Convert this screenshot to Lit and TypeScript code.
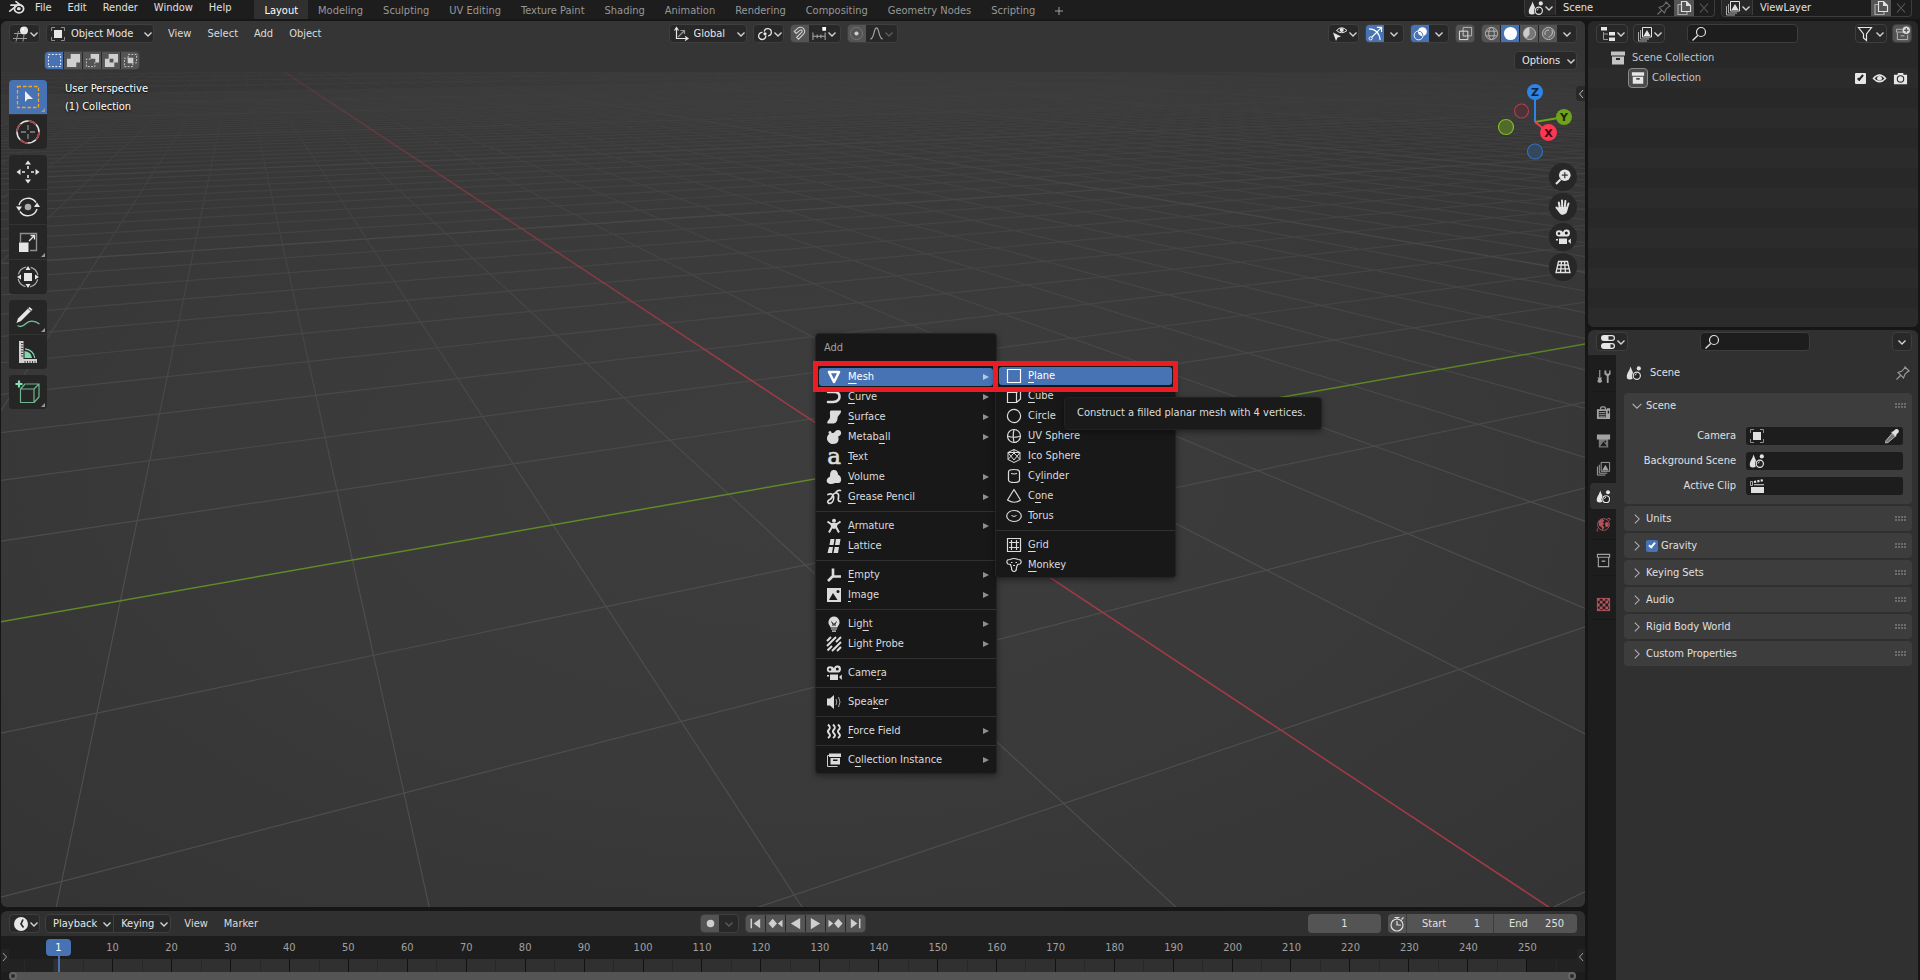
import { LitElement, html, css, svg, nothing, TemplateResult } from "lit";
import { customElement, state } from "lit/decorators.js";
import { classMap } from "lit/directives/class-map.js";

type Shape = ReturnType<typeof svg>;

/* Icons share a 16x16 box; tool icons a 24x24 box. */
const ICONS: Record<string, Shape> = {
  blender: svg`<path d="M.8 11.2 8.4 5.2M2 5.2h8M7 1.6l6 4.6" fill="none" stroke="currentColor" stroke-width="1.7" stroke-linecap="round"/><ellipse cx="10" cy="8.8" rx="4.6" ry="4" fill="none" stroke="currentColor" stroke-width="1.8"/><ellipse cx="9.8" cy="8.7" rx="1.9" ry="1.6" fill="currentColor"/>`,
  view3d: svg`<g fill="none" stroke="#999" stroke-width="1"><path d="M1 7.5h8M0 12.500h14M5.500 5 3 15.500M11 9 10 15.500"/></g><circle cx="11" cy="4.500" r="4" fill="currentColor"/><circle cx="10" cy="3.400" r="1.100" fill="#fff"/>`,
  object: svg`<path d="M1.500 5V1.500H5M11 1.500h3.500V5M14.500 11v3.500H11M5 14.500H1.500V11" fill="none" stroke="#8f8f8f"/><path d="M4 4h8v8H4z" fill="currentColor"/>`,
  selSet: svg`<path d="M1.500 1.500h13v13h-13z" fill="none" stroke="#fff" stroke-dasharray="2 1.700"/>`,
  selAdd: svg`<path d="M5 1h10v9h-4v5H1V6h4z" fill="currentColor"/>`,
  selSub: svg`<path d="M6 1h9v9h-4V6H6z" fill="currentColor"/><path d="M6 6.500H1.500v8h9V10" fill="none" stroke="currentColor" stroke-dasharray="2 1.500"/>`,
  selInv: svg`<path fill-rule="evenodd" d="M5 1h10v9h-4v5H1V6h4zm1 5v4h4V6z" fill="currentColor"/>`,
  selInt: svg`<path d="M5.500 5V1.500h9v9H11M10.500 11v3.500h-9v-9H5" fill="none" stroke="currentColor" stroke-dasharray="2 1.500"/><path d="M5 5h6v6H5z" fill="currentColor"/>`,
  orient: svg`<g fill="none" stroke="currentColor" stroke-width="1.200"><path d="M3.500 1.500v11h11"/><path d="M1.500 4.500l2-3 2 3M12 10.500l3 2-3 2"/><path d="M5 11l6-6M7.500 4.500h4V8" stroke="#999"/></g>`,
  pivot: svg`<g fill="none" stroke="currentColor" stroke-width="1.300"><path d="M7.200 5.500a3.600 3.600 0 1 1 3.800 4.300"/><path d="M8.800 9.500A3.600 3.600 0 1 1 5.500 6.300"/></g><circle cx="8" cy="7.800" r="1.600" fill="currentColor"/>`,
  magnet: svg`<path d="M2.500 5.800 6 2.500C8 1 11 1 12.500 3s1.500 4-.5 6l-5 5-2-2 5.200-5.200c1-1 .8-2-.2-2.400s-1.500 0-2 .5L4.500 8z" fill="none" stroke="currentColor" stroke-width="1.200"/>`,
  increment: svg`<path d="M1 7v8M5.500 9v4M9.500 9v4M14 7v8M1 11h13" stroke="#aaa" stroke-width="1.100"/><path d="M11 1h4v4h-4z" fill="#fff"/>`,
  prop: svg`<circle cx="8" cy="8" r="6.500" fill="none" stroke="#777"/><circle cx="8" cy="8" r="2.200" fill="#ccc"/>`,
  falloff: svg`<path d="M1.500 14C6 13 5 2 8 2s2 11 6.500 12" fill="none" stroke="#a8a8a8" stroke-width="1.200"/>`,
  visibility: svg`<path d="M1 6.500l8 4-3.400 1L4 15z" fill="currentColor"/><path d="M4.500 4.500Q9.500-1 15 4.500 9.500 9 4.500 4.500z" fill="none" stroke="currentColor"/><circle cx="9.700" cy="4" r="2" fill="currentColor"/>`,
  gizmo: svg`<path d="M1 3c7 0 11 4 12 12M4 12 14 2M9.500 1.500H14.500V6.500" fill="none" stroke="#fff" stroke-width="1.200"/><circle cx="2.800" cy="13.200" r="1.700" fill="none" stroke="#fff"/>`,
  overlay: svg`<circle cx="10" cy="6" r="4.800" fill="#fff"/><circle cx="6" cy="10" r="4.800" fill="none" stroke="#fff"/><path d="M6 5.500a5 5 0 0 1 4.500 5" fill="none" stroke="#4772b3"/>`,
  xray: svg`<path d="M5.500 1.500h9v9h-9z" fill="none" stroke="#bbb"/><path d="M1.500 5.500h9v9h-9z" fill="none" stroke="#e6e6e6"/><path d="M5.500 5v6H11" fill="none" stroke="#bbb" stroke-dasharray="1.500 1"/>`,
  wire: svg`<g fill="none" stroke="#bbb"><circle cx="8" cy="8" r="6.500"/><ellipse cx="8" cy="8" rx="3" ry="6.500"/><path d="M2.500 5.500h11M2.500 10.500h11"/></g>`,
  solid: svg`<circle cx="8" cy="8" r="7" fill="#fff"/>`,
  material: svg`<circle cx="8" cy="8" r="6.500" fill="#777" stroke="#bbb"/><path d="M8 8V1.500a6.500 6.500 0 0 0-5 10.300c1 1 3 1.200 3-.3S8 11 8 8z" fill="#ccc"/>`,
  rendered: svg`<circle cx="8" cy="8" r="6.500" fill="#6a6a6a" stroke="#bbb"/><path d="M4.500 9.500c-1-3.500 1-5.500 4-5M11.500 4c1.500 3 .5 6.500-3.500 8" fill="none" stroke="#ccc"/>`,
  scene: svg`<path d="M4.500 1.500C5.500 5 8 8 7.500 11c0 2-1 3.500-3.500 3.500S.500 13.500.800 11C1 8 3.500 6 4.500 1.500z" fill="currentColor"/><circle cx="10.800" cy="10.800" r="4.800" fill="#222"/><circle cx="10.800" cy="10.800" r="3.600" fill="none" stroke="currentColor" stroke-width="1.200"/><circle cx="12.800" cy="3.400" r="2.100" fill="currentColor"/><path d="M9 10.500q.300-1.500 1.700-1.700" fill="none" stroke="currentColor"/>`,
  pin: svg`<path d="M9.500 1.500l5 5M10 2.500 7 6 3 7.500l5.500 5.500L10 9l3.500-3M5.500 10.500 1.500 14.500" fill="none" stroke="currentColor" stroke-width="1.100"/>`,
  copy: svg`<path d="M5.500 1.500h5l4 4v6h-9z" fill="none" stroke="currentColor" stroke-width="1.200"/><path d="M10 1l5 5h-5z" fill="currentColor"/><path d="M5 4.500H2v10h9V12" fill="none" stroke="#aaa" stroke-width="1.200"/>`,
  close: svg`<path d="M4 3.500l8 9M12 3.500l-8 9" stroke="currentColor" stroke-width="1.100"/>`,
  layers: svg`<path d="M5.500 1.500h9v9.500h-9z" fill="none" stroke="currentColor"/><path d="M6.500 10 10 4l3.500 6z" fill="currentColor"/><path d="M3.500 4v9H12M1.500 6v9H10" fill="none" stroke="#aaa"/>`,
  outliner: svg`<path d="M1 1h6v3.500H1zM9 6h6v3.500H9zM9 11.500h6V15H9z" fill="currentColor"/><path d="M3.500 6v7.500H8M3.500 8H8" fill="none" stroke="#999"/>`,
  search: svg`<circle cx="10" cy="6" r="4.500" fill="none" stroke="currentColor" stroke-width="1.200"/><path d="M6.700 9.500 1.500 14.500" stroke="currentColor" stroke-width="1.400"/>`,
  filter: svg`<path d="M1.500 1.500h13L9.500 8v6.500L6.500 12V8z" fill="none" stroke="currentColor" stroke-width="1.200"/>`,
  newColl: svg`<path d="M8 3.500H1.500v3h8M2.500 7v7.500h11V9.500M6 10.500h4" fill="none" stroke="#bbb"/><circle cx="12" cy="4.500" r="4" fill="#ddd"/><path d="M12 2v5M9.500 4.500h5" stroke="#444" stroke-width="1.200"/>`,
  collection: svg`<path d="M1 1.500h14v4H1z" fill="currentColor"/><path fill-rule="evenodd" d="M2 6.500h12v8H2zm4 1.500v2h4V8z" fill="currentColor"/>`,
  collOutline: svg`<path d="M1.500 1.500h13v3h-13zM2.500 4.500v10h11v-10" fill="none" stroke="currentColor" stroke-width="1.200"/><path d="M6 8h4v1.500H6z" fill="currentColor"/>`,
  eye: svg`<path d="M1.500 8Q8 .500 14.500 8 8 15 1.500 8z" fill="none" stroke="currentColor" stroke-width="1.500"/><circle cx="8" cy="7.800" r="2.600" fill="currentColor"/>`,
  photo: svg`<path fill-rule="evenodd" d="M5 2h6v2h4v10H1V4h4zm3 2.500a4 4 0 1 0 0 8 4 4 0 0 0 0-8z" fill="currentColor"/><circle cx="8" cy="8.500" r="2.800" fill="currentColor"/>`,
  props: svg`<rect x="1" y="1" width="14" height="6" rx="3" fill="currentColor"/><rect x="1" y="9" width="14" height="6" rx="3" fill="currentColor"/><path d="M8.500 2.200H12a1.800 1.800 0 0 1 0 3.600H8.500zM10.500 10.200H12a1.800 1.800 0 0 1 0 3.600h-1.500z" fill="#2a2a2a"/>`,
  tool: svg`<path d="M4 1v8" stroke="currentColor" stroke-width="1.200"/><path d="M1.500 9h5l-1 2 1 1.500c0 3-5 3-5 0l1-1.500z" fill="currentColor"/><path d="M9 1.500v4l2.500 2V14q0 1 1 1t1-1V7.500l2-2v-4h-1.500v3L12.500 5 11 4.500v-3z" fill="currentColor"/>`,
  render: svg`<path d="M5 5V3.500q0-1.500 1.500-1.500h2Q10 2 10 3.500V5" fill="none" stroke="currentColor" stroke-width="1.300"/><path fill-rule="evenodd" d="M1 4.500h10.500V3.500H15V15H1zM3 6.500v6.500h7.500V6.500zM12.500 6v3H14V6z" fill="currentColor"/><path d="M3.500 8H10M3.500 10H10M3.500 12H10" stroke="currentColor" stroke-width=".9"/>`,
  output: svg`<path d="M1 1.500h14v5H13.500V5h-11V6.500H1z" fill="currentColor"/><path d="M3 5.500h10V15.500H3z" fill="#777"/><path d="M4.500 14 8 9l3.500 5z" fill="#1d1d1d"/><path d="M1 3.500h14v3.500H1z" fill="currentColor"/><circle cx="10" cy="9" r="1" fill="#1d1d1d"/>`,
  world: svg`<circle cx="8" cy="8" r="6.300" fill="none" stroke="currentColor"/><path d="M3 4l4-2 2 2-2 2 2 1-2 2 2 2-2 3-1-3-3-2zM10.500 5l3 1v4l-3 1-1-3z" fill="currentColor"/><path d="M12 2q3-1.500 3 0T14 4M2 12Q0 15.500 2.500 15" fill="none" stroke="currentColor"/>`,
  texture: svg`<path d="M1.500 1.500h13v13h-13z" fill="none" stroke="currentColor"/><path d="M1 1h3v3H1zM7 1h3v3H7zM12 1h3v3h-3zM4 4h3v3H4zM10 4h3v3h-3zM1 7h3v3H1zM7 7h3v3H7zM13 7h2v3h-2zM4 10h3v3H4zM10 10h3v3h-3zM1 12.500h3V15H1zM7 13h3v2H7zM12.500 13H15v2h-2.500z" fill="currentColor"/>`,
  dropper: svg`<path d="M8 5.500l3 3-7 6-2.500.500L2 12.500z" fill="#777" stroke="#ccc" stroke-width=".8"/><path d="M7 4l2-.5L11.500 1.200c2-1 4 1 3.200 3L12.500 6.500 12 9z" fill="currentColor"/>`,
  clip: svg`<path d="M1.500 3.500h2v4h-2z" fill="none" stroke="#aaa"/><path d="M5 4l10-2" fill="none" stroke="currentColor" stroke-width="2.200" stroke-dasharray="2.200 1.200"/><path d="M5 6.200h10v1H5zM2 9h13v6H2z" fill="currentColor"/>`,
  panelOpen: svg`<path d="M3 5.500l5 5 5-5" fill="none" stroke="currentColor" stroke-width="1.200"/>`,
  panelClosed: svg`<path d="M5.500 3l5 5-5 5" fill="none" stroke="currentColor" stroke-width="1.200"/>`,
  clock: svg`<circle cx="8" cy="8" r="7" fill="currentColor"/><path d="M10 3.500 8 8l2.500 3.500" fill="none" stroke="#282828" stroke-width="1.700"/>`,
  record: svg`<circle cx="8" cy="8" r="4" fill="currentColor"/>`,
  first: svg`<path d="M3.500 3v10" stroke="currentColor" stroke-width="1.600"/><path d="M13 3v10L6 8z" fill="currentColor"/>`,
  prevKey: svg`<path d="M5 3l4.500 5L5 13 .500 8zM15.500 4v8L10.500 8z" fill="currentColor"/>`,
  playRev: svg`<path d="M13 2v12L3 8z" fill="currentColor"/>`,
  play: svg`<path d="M3 2v12l10-6z" fill="currentColor"/>`,
  nextKey: svg`<path d="M11 3l4.500 5L11 13 6.500 8zM.500 4v8L5.500 8z" fill="currentColor"/>`,
  last: svg`<path d="M12.500 3v10" stroke="currentColor" stroke-width="1.600"/><path d="M3 3v10l7-5z" fill="currentColor"/>`,
  stopwatch: svg`<circle cx="8" cy="9" r="6" fill="none" stroke="currentColor" stroke-width="1.200"/><path d="M8 5v4h4M5.500 1.500h5M8 1.500V3M12.500 3.500l2-2" fill="none" stroke="currentColor" stroke-width="1.200"/>`,

  mesh: svg`<path d="M3 3h10L8 13z" fill="none" stroke="currentColor" stroke-width="2.600" stroke-linejoin="round"/>`,
  curve: svg`<path d="M2 3h6c4 0 5.500 2 5.500 4.500S12 13 7 13H2" fill="none" stroke="currentColor" stroke-width="2.600" stroke-linecap="round"/>`,
  surface: svg`<path d="M5 1.500h9.500c.5 0 .5.500.5 1-.3 3-3.500 4-3.500 7 0 2-1.500 5-4 5H1.500c-1-2.500 2-3.500 2.500-6C4.500 6 3 2 5 1.500z" fill="currentColor"/>`,
  metaball: svg`<path d="M7 4c2 0 2-3 5-3 4 0 4 5 1 6-1.500.5 0 2-.5 4-.500 3-3 4-5.500 4S1 13 1 9.500 3.500 4 7 4z" fill="currentColor"/><circle cx="4" cy="3.500" r="1.500" fill="currentColor"/>`,
  text: svg`<text x="8" y="14.500" text-anchor="middle" font-family="DejaVu Serif, serif" font-size="23" stroke="currentColor" stroke-width=".7" fill="currentColor">a</text>`,
  volume: svg`<path d="M7 1c3-.5 5 1.500 5 4.500 3 1.500 4 5 2.500 7.500-1.500 2-3.500.500-5.500 1-2.500 1.500-6.500 1.500-8-1-1-2.500 1-4.500 3-5.500C4 4 4.500 1.500 7 1z" fill="currentColor"/>`,
  grease: svg`<path d="M14.500 1.500c-2-.5-3.500.300-4.500 1.700M2 5.500c3-1.500 5-.5 5.500 2s-.500 5.500-2.500 6.500-4-.5-3-2 3-1 4-4 2-4 4-4 3 1.500 2.500 4-.5 4.500 2 4.500" fill="none" stroke="currentColor" stroke-width="1.700" stroke-linecap="round"/>`,
  armature: svg`<circle cx="8" cy="2.800" r="2" fill="currentColor"/><path d="M1.500 3.500 5 6h6l3.500-2.500M5.500 6l.500 3-3 5.500M10.500 6 10 9l3 5.500" fill="none" stroke="currentColor" stroke-width="2"/><path d="M5 5h6l-.500 5-2.500 1-2.500-1z" fill="currentColor"/>`,
  lattice: svg`<path d="M4.500 1h4L7.500 7h-4zM10 1h4.500l-1 6H9zM3 9h4l-1 6H1.500zM8.700 9h4.300l-1 6H7.500z" fill="currentColor"/>`,
  empty: svg`<path d="M7 1.500V9.500M7 9.500h8M7 9l-5 5" fill="none" stroke="currentColor" stroke-width="2.600"/>`,
  image: svg`<path d="M1 1h14v14H1z" fill="currentColor"/><path d="M3 13l4-7 4.500 7z" fill="#181818"/><circle cx="12" cy="4.500" r="1.500" fill="#181818"/>`,
  light: svg`<path d="M8 .500a5.800 5.800 0 0 0-3.700 10V11.500h7.400V10.500A5.800 5.800 0 0 0 8 .500zM5 12.500h6v1H5zM6 14.500h4v1.200H6z" fill="currentColor"/><path d="M5.500 5.500l1.500 2.500V10M10.500 5.500 9 8V10M7 8h2" fill="none" stroke="#181818"/>`,
  probe: svg`<path d="M1 5l4-4M1 10l9-9M1.500 14.500 6 10M10 6l5-5M6 15l9-9M11 15l4-4" stroke="currentColor" stroke-width="2"/>`,
  camera: svg`<path d="M4 1.200a3 3 0 1 0 0 6.300h7.500A3.500 3.500 0 1 0 8 3.500C7.500 2 6 1.200 4 1.200zM4 9.500h8V15H4zM13 12l2.800-2.500V15zM1 10h2v1.500H1z" fill="currentColor"/><circle cx="4" cy="4.500" r="1.300" fill="#181818"/><circle cx="11.300" cy="4" r="1.500" fill="#181818"/>`,
  speaker: svg`<path d="M1 4.500h3L8 1v14l-4-3.500H1z" fill="currentColor"/><path d="M10 5q1.500 3 0 6M12.500 3q3 5 0 10" fill="none" stroke="#aaa"/>`,
  force: svg`<path d="M2 1.500c2.500 2.500 2.500 3.500 1 5s-1.500 2.500 0 4 1.500 2.500-1 4.500M7 1.500c2.500 2.500 2.500 3.500 1 5s-1.500 2.500 0 4 1.500 2.500-1 4.500M12 1.500c2.500 2.500 2.500 3.500 1 5s-1.500 2.500 0 4 1.500 2.500-1 4.500" fill="none" stroke="currentColor" stroke-width="1.900"/>`,
  instance: svg`<path d="M3 1.500h12V5H3z" fill="currentColor"/><path fill-rule="evenodd" d="M4.500 6H14v6.500H4.500zM7 7.500V9h4.500V7.500z" fill="currentColor"/><path d="M3.500 3.500h-2V14.500h10" fill="none" stroke="#ccc"/>`,

  plane: svg`<path d="M1.500 1.500h13v13h-13z" fill="none" stroke="currentColor" stroke-width="1.200"/>`,
  cube: svg`<path d="M1.500 4.500h9v10h-9zM1.500 4.500l3-3h10v9.500l-4 3.500M10.500 4.500l4-3" fill="none" stroke="currentColor" stroke-width="1.200"/>`,
  circle: svg`<circle cx="8" cy="8" r="6.600" fill="none" stroke="currentColor" stroke-width="1.200"/>`,
  uv: svg`<g fill="none" stroke="currentColor" stroke-width="1.200"><circle cx="8" cy="8" r="6.500"/><path d="M8 1.500Q6.500 8 8 14.500M1.500 8Q8 10.500 14.500 8"/></g>`,
  ico: svg`<path d="M8 1.500l6 3v7l-6 3-6-3v-7zM2 4.500l12 0L8 12zM2 11.500 8 5l6 6.500M8 1.500V5" fill="none" stroke="currentColor"/>`,
  cylinder: svg`<path d="M2.500 4Q2.500 1.500 8 1.500T13.500 4v8q0 2.500-5.500 2.500T2.500 12z" fill="none" stroke="currentColor" stroke-width="1.200"/><path d="M5 5.500q3 1 6 0" fill="none" stroke="currentColor"/>`,
  cone: svg`<path d="M8 1.500 1.500 12Q8 16.500 14.500 12z" fill="none" stroke="currentColor" stroke-width="1.200" stroke-linejoin="round"/>`,
  torus: svg`<ellipse cx="8" cy="8" rx="7.300" ry="5.500" fill="none" stroke="currentColor" stroke-width="1.200"/><path d="M5.500 7.500q2.500 2 5 0" fill="none" stroke="currentColor"/>`,
  grid: svg`<path d="M1.500 1.500h13v13h-13zM5.500 3v10M10.500 3v10M3 5.500h10M3 10.500h10" fill="none" stroke="currentColor" stroke-width="1.200"/>`,
  monkey: svg`<path d="M4 2.500q4-2 8 0l2.500.5q1.500 2.500-.5 4l-2.500.5-1 3q0 4-2.500 4t-2.500-4l-1-3L2 7Q0 5.500 1.500 3z" fill="none" stroke="currentColor" stroke-width="1.200"/><path d="M5 5.500h1.500M9.500 5.500H11M7 8.500h2" stroke="currentColor"/>`,
};

const TOOLS: Record<string, Shape> = {
  select: svg`<path d="M1.500 1.500h21v21h-21z" fill="none" stroke="#f5a623" stroke-width="1.300" stroke-dasharray="3.500 2"/><path d="M9 6v11l2.800-3 5.200 0z" fill="#eee"/>`,
  cursor: svg`<circle cx="12" cy="12" r="11" fill="none" stroke="#e6e6e6" stroke-width="1.500"/><circle cx="12" cy="12" r="11" fill="none" stroke="#a33b42" stroke-width="1.500" stroke-dasharray="8.640 8.640"/><path d="M12 5v5M12 14v5M5 12h5M14 12h5" stroke="#8a8a8a" stroke-width="1.300"/>`,
  move: svg`<g fill="#e6e6e6"><path d="M12 .5l3 4H9zM12 23.500l3-4H9zM.5 12l4-3v6zM23.500 12l-4-3v6zM11.200 6h1.600v3h-1.600zM11.200 15h1.600v3h-1.600zM6 11.200h3v1.600H6zM15 11.200h3v1.600h-3z"/></g>`,
  rotate: svg`<path d="M3 10a9.500 9.500 0 0 1 17-2.500M21 14a9.500 9.500 0 0 1-17 2.500" fill="none" stroke="#e6e6e6" stroke-width="1.400"/><path d="M0 11.500h6l-3 4.500zM18 12h6l-3-4.500z" fill="#e6e6e6"/><circle cx="12" cy="12" r="3.300" fill="#aaa"/>`,
  scale: svg`<path d="M4.500 12V3.500h16v17H14" fill="none" stroke="#8f8f8f" stroke-width="1.400"/><path d="M3 12.500h9.500V22H3z" fill="#e6e6e6"/><path d="M13 11l5-5M14.500 5.500H18.500V9.500" fill="none" stroke="#e6e6e6" stroke-width="1.300"/>`,
  transform: svg`<circle cx="12" cy="12" r="10" fill="none" stroke="#aaa" stroke-width="1.300" stroke-dasharray="11 4.700" stroke-dashoffset="-2.500"/><path d="M8 8h8v8H8z" fill="#e6e6e6"/><path d="M12 1l2.500 4h-5zM12 23l2.500-4h-5zM1 12l4-2.500v5zM23 12l-4-2.500v5z" fill="#e6e6e6"/>`,
  annotate: svg`<path d="M.5 18 2 13.500 13.500 2 16.500 4.500 5 16z" fill="#e6e6e6"/><path d="M11.500 3l4 3.500" stroke="#555"/><path d="M1.500 20.500c3.500 2.500 6 .5 8.500-2s7.500-4 13.500.5" fill="none" stroke="#70c49a" stroke-width="1.300"/>`,
  measure: svg`<path d="M3 1h4.500v18H21v4H3z" fill="#d0d0d0"/><path d="M5 3.500h2.500M5 6h2.500M5 8.500h2.500M5 11h2.500M5 13.500h2.500M5 16h2.500M9 21v2M11.500 21v2M14 21v2M16.500 21v2M19 21v2" stroke="#444"/><path d="M8.500 11Q15 11.500 16 18H8.500z" fill="#84d6ac"/><path d="M9 8.800Q17.500 10 18.800 18" fill="none" stroke="#84d6ac" stroke-width="1.200"/>`,
  addCube: svg`<path d="M4.500 9h13.500v13.500H4.500zM4.500 9l5-5.500M18 9l5-5M18 22.500l5-5.500V4H10" fill="none" stroke="#70b58f" stroke-width="1.200"/><path d="M3 .5v7M-.5 4h7" stroke="#84e0b0" stroke-width="2.200"/>`,
};

const NAV: Record<string, Shape> = {
  "Zoom in/out": svg`<circle cx="9.800" cy="6.200" r="5.800" fill="#e3e3e3"/><path d="M5.500 10.500 1 15" stroke="#e3e3e3" stroke-width="2.200"/><path d="M9.800 3.200v6M6.800 6.200h6" stroke="#333" stroke-width="1.200"/>`,
  "Move the view": svg`<path d="M4.800 9 3.800 3.500M7.200 8 7 1.500M9.800 8l.6-6M12 9l1.500-4.500M4.500 12 1.500 8.500" stroke="#e3e3e3" stroke-width="2" stroke-linecap="round"/><path d="M3.500 8h9.500q0 3.500-1.500 6Q9 16.500 6 15.500 4 14 2.500 10.500z" fill="#e3e3e3"/>`,
  "Toggle camera view": ICONS.camera,
  "Switch projection": svg`<path d="M3.500 2.500h9l2.500 11H1zM2.700 6h10.600M1.800 9.800h12.400M6.500 2.500l-1 11M9.500 2.500l1 11" fill="none" stroke="#e3e3e3" stroke-width="1.300"/>`,
};

interface MenuEntry { icon: string; label: string; key: number; sub?: boolean; active?: boolean; }

const ADD_MENU: MenuEntry[][] = [
  [
    { icon: "mesh", label: "Mesh", key: 0, sub: true, active: true },
    { icon: "curve", label: "Curve", key: 0, sub: true },
    { icon: "surface", label: "Surface", key: 0, sub: true },
    { icon: "metaball", label: "Metaball", key: 5, sub: true },
    { icon: "text", label: "Text", key: 0 },
    { icon: "volume", label: "Volume", key: 0, sub: true },
    { icon: "grease", label: "Grease Pencil", key: 0, sub: true },
  ],
  [
    { icon: "armature", label: "Armature", key: 0, sub: true },
    { icon: "lattice", label: "Lattice", key: 0 },
  ],
  [
    { icon: "empty", label: "Empty", key: 0, sub: true },
    { icon: "image", label: "Image", key: 0, sub: true },
  ],
  [
    { icon: "light", label: "Light", key: 3, sub: true },
    { icon: "probe", label: "Light Probe", key: 6, sub: true },
  ],
  [{ icon: "camera", label: "Camera", key: 4 }],
  [{ icon: "speaker", label: "Speaker", key: 4 }],
  [{ icon: "force", label: "Force Field", key: 0, sub: true }],
  [{ icon: "instance", label: "Collection Instance", key: 1, sub: true }],
];

const MESH_MENU: MenuEntry[][] = [
  [
    { icon: "plane", label: "Plane", key: 0, active: true },
    { icon: "cube", label: "Cube", key: 0 },
    { icon: "circle", label: "Circle", key: 2 },
    { icon: "uv", label: "UV Sphere", key: 0 },
    { icon: "ico", label: "Ico Sphere", key: 0 },
    { icon: "cylinder", label: "Cylinder", key: 2 },
    { icon: "cone", label: "Cone", key: 1 },
    { icon: "torus", label: "Torus", key: 0 },
  ],
  [
    { icon: "grid", label: "Grid", key: 0 },
    { icon: "monkey", label: "Monkey", key: 0 },
  ],
];

const WORKSPACES = ["Layout", "Modeling", "Sculpting", "UV Editing", "Texture Paint", "Shading", "Animation", "Rendering", "Compositing", "Geometry Nodes", "Scripting"];

const icon = (name: string, cls = ""): TemplateResult =>
  html`<svg class="ic ${cls}" viewBox="0 0 16 16" aria-hidden="true">${ICONS[name]}</svg>`;

const chevron = (dim = false): TemplateResult =>
  html`<svg class=${classMap({ chev: true, dim })} viewBox="0 0 10 10" aria-hidden="true"><path d="M1.500 3.500 5 7l3.500-3.500" fill="none" stroke="currentColor" stroke-width="1.400"/></svg>`;

const range = (a: number, b: number) => Array.from({ length: b - a + 1 }, (_, i) => a + i);

/* Floor grid: two line families, each through its own vanishing point on the horizon. */
const HORIZON = 41;
const FLOOR = 1107;
const along = (vx: number, base: number) => vx + ((base - vx) * (FLOOR - HORIZON)) / (907 - HORIZON);
const xLine = (k: number) => ({ vx: 238, base: 1549 + 373 * k });
const yLine = (k: number) => ({ vx: 3314, base: -1626 - 795 * k });
const gridLine = (l: { vx: number; base: number }) =>
  svg`<line x1=${l.vx} y1=${HORIZON} x2=${Math.round(along(l.vx, l.base))} y2=${FLOOR}></line>`;

@customElement("app-root")
export class AppRoot extends LitElement {
  @state() private gravity = true;

  static styles = css`
    :host {
      display: flex;
      flex-direction: column;
      height: 100vh;
      overflow: hidden;
      background: #161616;
      color: #e0e0e0;
      font: 11px/14px "DejaVu Sans Condensed", "DejaVu Sans", sans-serif;
    }
    *, *::before, *::after { box-sizing: border-box; }
    button, input, select {
      font: inherit;
      color: inherit;
      margin: 0;
      padding: 0;
      border: 0;
      background: none;
      outline: 0;
      white-space: nowrap;
    }
    select { appearance: none; }
    .ic { width: 16px; height: 16px; flex: none; display: block; overflow: visible; }
    .chev { width: 10px; height: 10px; flex: none; display: block; color: #d4d4d4; pointer-events: none; }
    .dim { opacity: 0.3; }
    .grow { flex: 1; }

    .topbar { display: flex; align-items: flex-start; height: 21px; background: #1d1d1d; border-bottom: 2px solid #161616; padding-left: 9px; padding-right: 8px; flex: none; }
    .logo { height: 14px; margin-right: 2px; }
    .menu-btn { padding: 0 8px; height: 15px; line-height: 15px; }
    .tabs { display: flex; margin-left: 15px; }
    .tab { padding: 2px 10px 0; height: 19px; color: #989898; }
    .tab.on { background: #303030; color: #fff; }
    .idblock { display: flex; height: 17px; border: 1px solid #3d3d3d; border-top: 0; border-radius: 0 0 4px 4px; background: #1d1d1d; margin-left: 6px; overflow: hidden; }
    .idtype { display: flex; align-items: center; width: 31px; height: 15px; padding-left: 3px; border-right: 1px solid #3d3d3d; background: #282828; }
    .idname { width: 98px; padding-left: 7px; height: 15px; }
    .idbtn { width: 20px; display: grid; place-items: center; height: 16px; }
    .idbtn.lit { background: #545454; }
    .idbtn.off { color: #5c5c5c; }
    .idpin { color: #6c6c6c; }

    .main { flex: 1; min-height: 0; display: grid; grid-template-columns: minmax(0, 1fr) 330px; column-gap: 3px; padding: 0 2px 0 1px; }
    .left { display: flex; flex-direction: column; gap: 4px; min-height: 0; }
    .right { display: flex; flex-direction: column; gap: 3px; min-height: 0; }

    .viewport { position: relative; flex: 1; min-height: 0; border-radius: 6px; overflow: hidden; background: radial-gradient(ellipse at 50% 50%, #3d3d3d 0%, #3a3a3a 50%, #343434 100%); }
    .scene3d { position: absolute; inset: 0; width: 100%; height: 100%; }
    .minor line { stroke: #4e4e4e; stroke-width: 1.2; }
    .major line { stroke: #565656; stroke-width: 1.4; }
    .vhead { position: relative; background: #353535; padding: 0 8px; }
    .row { display: grid; grid-template-columns: 1fr auto 1fr; height: 26px; align-items: start; padding-top: 3px; }
    .row.second { grid-template-columns: auto 1fr auto; height: 25px; padding-top: 4px; }
    .zone { display: flex; align-items: center; gap: 6px; }
    .zone.mid { margin-right: 20px; }
    .zone.end { justify-content: flex-end; }
    .zone.tools { padding-left: 35px; }
    .menus { display: flex; }
    .menus .menu-btn { height: 19px; line-height: 19px; color: #dcdcdc; }

    .ctl { display: flex; align-items: center; height: 19px; border: 1px solid #3f3f3f; border-radius: 4px; background: #282828; color: #e6e6e6; }
    .pair { width: 31px; padding-left: 3px; }
    .pick { padding-left: 3px; }
    .pick select { flex: 1; min-width: 0; padding-left: 5px; height: 17px; line-height: 17px; }
    .mode { width: 108px; }
    .orient { width: 78px; }
    .group { display: flex; border-radius: 4px; overflow: hidden; background: #282828; height: 19px; border: 1px solid #3f3f3f; gap: 1px; }
    .cell { width: 18px; height: 17px; display: grid; place-items: center; color: #cfcfcf; }
    .cell.lit { background: #545454; }
    .cell.blue { background: #4772b3; }
    .cell.duo { display: flex; align-items: center; width: 30px; padding-left: 2px; }
    .cell .ic { width: 15px; height: 15px; }
    .options { padding: 0 0 0 7px; width: 63px; justify-content: space-between; }

    .info { position: absolute; left: 64px; top: 59px; line-height: 18px; color: #fff; text-shadow: 0 1px 2px #000; margin: 0; }
    .toolbar { position: absolute; left: 8px; top: 59px; display: flex; flex-direction: column; gap: 6px; }
    .toolset { display: flex; flex-direction: column; gap: 1px; border-radius: 4px; overflow: hidden; background: #333; }
    .tool { position: relative; width: 38px; height: 34px; display: grid; place-items: center; background: #262626; }
    .tool.on { background: #4772b3; }
    .tool svg { width: 24px; height: 24px; display: block; overflow: visible; }
    .tool.more::after { content: ""; position: absolute; right: 2px; bottom: 2px; border: 2px solid transparent; border-right-color: #9a9a9a; border-bottom-color: #9a9a9a; }
    .axes { position: absolute; right: 8px; top: 58px; width: 88px; height: 88px; }
    .axes text { font-size: 11px; font-weight: bold; text-anchor: middle; font-family: "DejaVu Sans", sans-serif; }
    .nav { position: absolute; right: 8px; top: 142px; display: flex; flex-direction: column; gap: 2px; }
    .navbtn { width: 28px; height: 28px; border-radius: 50%; background: #272727; display: grid; place-items: center; color: #e3e3e3; }
    .navbtn svg { width: 16px; height: 16px; display: block; }
    .side-toggle { position: absolute; right: 0; top: 65px; width: 9px; height: 15px; border-radius: 4px 0 0 4px; background: #292929; color: #bbb; display: grid; place-items: center; }
    .arrow { width: 8px; height: 10px; display: block; }

    .popup { position: absolute; background: #181818; border: 1px solid #242424; border-radius: 4px; box-shadow: 0 2px 6px #0006; }
    .add { left: 814px; top: 312px; width: 182px; padding-bottom: 3px; }
    .mesh { left: 994px; top: 343px; width: 181px; padding: 1px 0 2px; }
    .pop-title { height: 33px; padding: 7px 8px 0; color: #a0a0a0; margin: 0; font-size: 11px; font-weight: normal; }
    .section { display: flex; flex-direction: column; }
    .section + .section { border-top: 1px solid #303030; margin-top: 4px; padding-top: 4px; }
    .item { display: flex; align-items: center; gap: 6px; height: 18px; margin: 1px 3px; padding: 0 4px 0 7px; border-radius: 3px; text-align: left; color: #dcdcdc; }
    .item.on { background: #4772b3; color: #fff; }
    .key { text-decoration: underline; text-underline-offset: 3px; text-decoration-thickness: 1px; text-decoration-skip-ink: none; }
    .sub { margin-left: auto; border: 3px solid transparent; border-left: 6px solid #8f8f8f; border-right: 0; }
    .item.on .sub { border-left-color: #b9c8e2; }
    .mark { position: absolute; top: 340px; width: 185px; height: 31px; border: 5px solid #ed1c24; pointer-events: none; }
    .mark.one { left: 812px; }
    .mark.two { left: 992px; }
    .tooltip { position: absolute; left: 1063px; top: 376px; padding: 8px 12px; width: 258px; height: 33px; border-radius: 4px; background: #1a1a1a; border: 1px solid #222; color: #dcdcdc; box-shadow: 0 2px 6px #0006; white-space: nowrap; }

    .panel { border-radius: 6px; overflow: hidden; }
    .outliner { background: #282828; flex: 0 0 306px; display: flex; flex-direction: column; }
    .phead { display: flex; gap: 5px; height: 27px; padding: 3px 6px 0 8px; flex: none; align-items: flex-start; }
    .phead .pair { width: 32px; }
    .phead .pair.snug { padding-left: 1px; gap: 2px; }
    .search { display: flex; align-items: center; height: 19px; border: 1px solid #3d3d3d; border-radius: 4px; background: #1d1d1d; width: 111px; padding-left: 3px; margin-left: 17px; }
    .search input { width: 80px; }
    .tree { flex: 1; background: repeating-linear-gradient(#282828 0 20px, #2b2b2b 20px 40px); list-style: none; margin: 0; padding: 0; color: #c3c3c3; }
    .branch { display: flex; align-items: center; height: 20px; padding-left: 22px; gap: 6px; }
    .branch.child { padding: 0 10px 0 40px; gap: 4px; }
    .boxed { width: 20px; height: 20px; display: grid; place-items: center; border: 1px solid #8a8a8a; border-radius: 4px; background: #4a4a4a; color: #e6e6e6; }
    .boxed .ic { width: 14px; height: 14px; }
    .toggles { display: flex; align-items: center; gap: 6px; margin-left: auto; color: #e6e6e6; }
    .toggles .ic { width: 15px; height: 15px; }
    .tick { appearance: none; width: 11px; height: 11px; border-radius: 1px; background: #e6e6e6; position: relative; flex: none; }
    .tick:checked::after { content: ""; position: absolute; left: 35%; top: 10%; width: 30%; height: 60%; border: solid #222; border-width: 0 2px 2px 0; rotate: 40deg; }
    .tick.blue { width: 12px; height: 12px; border-radius: 2px; background: #4772b3; }
    .tick.blue:checked::after { border-color: #fff; }
    .tick.blue:not(:checked) { background: #545454; }

    .properties { background: #303030; flex: 1; min-height: 0; display: flex; flex-direction: column; border-radius: 6px 6px 0 0; }
    .phead.prop { height: 25px; padding-top: 2px; }
    .phead.prop .search { width: 110px; margin-left: 67px; }
    .small { width: 20px; justify-content: center; }
    .pbody { flex: 1; display: grid; grid-template-columns: 28px minmax(0, 1fr); min-height: 0; }
    .ptabs { background: #1d1d1d; display: flex; flex-direction: column; padding: 8px 0 0 2px; color: #a3a3a3; }
    .ptab { width: 26px; height: 26px; margin-bottom: 2px; display: grid; place-items: center; border-radius: 4px 0 0 4px; }
    .ptab .ic { width: 15px; height: 15px; }
    .ptab.on { background: #303030; color: #e6e6e6; }
    .ptab.red { color: #b3525a; }
    .rule { height: 1px; border: 0; background: #181818; margin: 0 0 7px 2px; }
    .rule.late { margin-bottom: 15px; }
    .pmain { padding: 8px 6px 0 8px; display: flex; flex-direction: column; gap: 2px; }
    .crumb { display: flex; align-items: center; height: 20px; gap: 8px; padding: 0 1px 0 2px; margin-bottom: 8px; }
    .crumb .idpin { margin-left: auto; color: #9a9a9a; }
    .card { background: #3d3d3d; border-radius: 4px; }
    .ctitle { display: flex; align-items: center; width: 100%; height: 25px; padding: 0 5px 0 6px; gap: 2px; }
    .ctitle .ic { color: #b5b5b5; width: 14px; height: 14px; }
    .fold { display: flex; align-items: center; gap: 2px; height: 25px; text-align: left; }
    .glabel { padding-left: 1px; }
    .dots { width: 12px; height: 6px; margin-left: auto; background: radial-gradient(circle at 1px 1px, #6e6e6e 0.7px, transparent 1px) 0 0 / 3px 3px; }
    .fields { display: grid; grid-template-columns: 112px minmax(0, 1fr); row-gap: 7px; column-gap: 10px; padding: 9px 9px 9px 0; align-items: center; }
    .fields label { text-align: right; }
    .field { display: flex; align-items: center; height: 18px; background: #1d1d1d; border-radius: 3px; padding: 0 3px; }
    .field input { flex: 1; min-width: 0; }

    .timeline { flex: 0 0 69px; background: #1d1d1d; border-radius: 6px 6px 0 0; overflow: hidden; position: relative; display: flex; flex-direction: column; }
    .thead { display: grid; grid-template-columns: 1fr auto 1fr; height: 25px; flex: none; background: #303030; padding: 3px 8px 0 8px; }
    .tmid { display: flex; align-items: flex-start; gap: 6px; margin-right: 20px; }
    .tleft { display: flex; align-items: flex-start; gap: 5px; }
    .tright { display: flex; align-items: flex-start; gap: 7px; justify-content: flex-end; }
    .drop { display: flex; align-items: center; padding: 0 1px 0 7px; height: 17px; gap: 5px; color: #e6e6e6; }
    .drop + .drop { border-left: 1px solid #3f3f3f; }
    .tleft .group { gap: 0; }
    .cell.key19 { width: 19px; }
    .num { background: #545454; border-radius: 4px; height: 19px; width: 73px; text-align: center; }
    .range { display: flex; background: #545454; border-radius: 4px; height: 19px; overflow: hidden; }
    .range > * { border-left: 1px solid #3d3d3d; }
    .range > :first-child { border-left: 0; width: 18px; display: grid; place-items: center; }
    .span { display: flex; align-items: center; justify-content: space-between; padding: 0 13px 0 15px; width: 87px; }
    .span.last { width: 84px; }
    .span input { width: 30px; text-align: right; }
    .ruler { display: flex; height: 23px; padding: 5px 28px 0 82px; color: #a0a0a0; flex: none; }
    .ruler span { flex: 1; text-align: center; width: 0; }
    .ticks { display: flex; height: 13px; padding-left: 23px; background: #222; flex: none; }
    .ticks i { flex: 1; border-left: 1px solid #282828; }
    .ticks .in { background: #303030; }
    .ticks .ten { border-left-color: #121212; }
    .track { height: 8px; margin: 0 9px 0 8px; border-radius: 4px; background: #545454; display: flex; justify-content: space-between; flex: none; }
    .track i { width: 8px; height: 8px; border-radius: 50%; background: #2b2b2b; border: 2px solid #666; }
    .playhead { position: absolute; left: 45px; top: 28px; width: 25px; height: 17px; line-height: 17px; border-radius: 4px; background: #4772b3; color: #fff; text-align: center; }
    .playhead::after { content: ""; position: absolute; left: 12px; top: 17px; width: 2px; height: 16px; background: #4772b3; }
    .edge { position: absolute; top: 38px; width: 8px; height: 15px; display: grid; place-items: center; background: #232323; color: #a0a0a0; }
    .edge.l { left: 0; }
    .edge.r { right: 0; }
  `;

  private pair(name: string, label: string, cls = "") {
    return html`<button class="ctl pair ${cls}" aria-label=${label} aria-haspopup="menu">${icon(name)}${chevron()}</button>`;
  }

  private cell(name: string, label: string, cls = "") {
    return html`<button class="cell ${cls}" aria-label=${label}>${icon(name)}</button>`;
  }

  private dropCell(label: string, dim = false) {
    return html`<button class="cell" aria-label=${label} aria-haspopup="menu">${chevron(dim)}</button>`;
  }

  private idBlock(type: string, value: string, label: string, pin: boolean) {
    return html`<div class="idblock">
      <button class="idtype" aria-label="Browse ${label}">${icon(type)}${chevron()}</button>
      <input class="idname" aria-label=${label} .value=${value} />
      <button class="idbtn idpin" aria-label="Pin ${label}">${pin ? icon("pin") : nothing}</button>
      <button class="idbtn lit" aria-label="New ${label}">${icon("copy")}</button>
      <button class="idbtn off" aria-label="Remove ${label}">${icon("close")}</button>
    </div>`;
  }

  private topbar() {
    return html`<header class="topbar">
      <svg class="ic logo" viewBox="0 0 16 14" aria-hidden="true">${ICONS.blender}</svg>
      ${["File", "Edit", "Render", "Window", "Help"].map((m) => html`<button class="menu-btn">${m}</button>`)}
      <nav class="tabs">
        ${WORKSPACES.map((w, i) => html`<button class=${classMap({ tab: true, on: i === 0 })}>${w}</button>`)}
        <button class="tab" aria-label="Add workspace">
          <svg class="arrow" viewBox="0 0 8 10"><path d="M4 1v8M0 5h8" stroke="#a0a0a0"/></svg>
        </button>
      </nav>
      <span class="grow"></span>
      ${this.idBlock("scene", "Scene", "Scene", true)}
      ${this.idBlock("layers", "ViewLayer", "View layer", false)}
    </header>`;
  }

  private floor() {
    const xs = range(-22, 60);
    const ys = range(-5, 60);
    return html`<svg class="scene3d" viewBox="1 21 1585 886" preserveAspectRatio="xMidYMid slice" aria-hidden="true">
      <defs>
        <linearGradient id="fade" gradientUnits="userSpaceOnUse" x1="0" y1="41" x2="0" y2="907">
          <stop offset="0" stop-color="#000"/><stop offset=".04" stop-color="#222"/>
          <stop offset=".15" stop-color="#666"/><stop offset=".4" stop-color="#bbb"/><stop offset=".6" stop-color="#fff"/>
        </linearGradient>
        <linearGradient id="fadeAxis" gradientUnits="userSpaceOnUse" x1="0" y1="60" x2="0" y2="907">
          <stop offset="0" stop-color="#333"/><stop offset=".15" stop-color="#888"/><stop offset=".4" stop-color="#fff"/>
        </linearGradient>
        <mask id="far" maskUnits="userSpaceOnUse" x="0" y="0" width="1600" height="1200"><rect width="1600" height="1200" fill="url(#fade)"/></mask>
        <mask id="farAxis" maskUnits="userSpaceOnUse" x="0" y="0" width="1600" height="1200"><rect width="1600" height="1200" fill="url(#fadeAxis)"/></mask>
      </defs>
      <g mask="url(#far)">
        <g class="minor">
          ${xs.filter((k) => k % 10).map((k) => gridLine(xLine(k)))}
          ${ys.filter((k) => k % 10).map((k) => gridLine(yLine(k)))}
        </g>
        <g class="major">
          ${range(-2, 10).filter((k) => k).map((k) => gridLine(xLine(k * 10)))}
          ${range(1, 12).map((k) => gridLine(yLine(k * 10)))}
        </g>
      </g>
      <g mask="url(#farAxis)" stroke-width="1.500">
        <line x1="238" y1="41" x2="1852" y2="1107" stroke="#a33a47"></line>
        <line x1="3314" y1="41" x2="-1626" y2="907" stroke="#5f8a26"></line>
      </g>
    </svg>`;
  }

  private tool(name: string, label: string, on = false, more = false) {
    return html`<button class=${classMap({ tool: true, on, more })} aria-label=${label}>
      <svg viewBox="0 0 24 24" aria-hidden="true">${TOOLS[name]}</svg>
    </button>`;
  }

  private menu(sections: MenuEntry[][]) {
    return sections.map((s) => html`<div class="section" role="group">
      ${s.map((e) => html`<button class=${classMap({ item: true, on: !!e.active })} role="menuitem">
        ${icon(e.icon)}<span>${e.label.slice(0, e.key)}<span class="key">${e.label[e.key]}</span>${e.label.slice(e.key + 1)}</span>
        ${e.sub ? html`<i class="sub"></i>` : nothing}
      </button>`)}
    </div>`);
  }

  private viewport() {
    return html`<section class="viewport" aria-label="3D viewport">
      ${this.floor()}
      <div class="vhead">
        <div class="row">
          <div class="zone">
            ${this.pair("view3d", "Editor type")}
            <div class="ctl pick mode">
              ${icon("object")}
              <select aria-label="Mode"><option>Object Mode</option></select>
              ${chevron()}
            </div>
            <div class="menus">${["View", "Select", "Add", "Object"].map((m) => html`<button class="menu-btn">${m}</button>`)}</div>
          </div>
          <div class="zone mid">
            <div class="ctl pick orient">
              ${icon("orient")}
              <select aria-label="Transform orientation"><option>Global</option></select>
              ${chevron()}
            </div>
            ${this.pair("pivot", "Pivot point")}
            <div class="group">
              ${this.cell("magnet", "Snap", "lit")}
              <button class="cell duo" aria-label="Snapping">${icon("increment")}${chevron()}</button>
            </div>
            <div class="group">
              ${this.cell("prop", "Proportional editing", "lit")}
              <button class="cell duo" aria-label="Falloff">${icon("falloff")}${chevron(true)}</button>
            </div>
          </div>
          <div class="zone end">
            ${this.pair("visibility", "Object visibility")}
            <div class="group">${this.cell("gizmo", "Show gizmos", "blue")}${this.dropCell("Gizmo options")}</div>
            <div class="group">${this.cell("overlay", "Show overlays", "blue")}${this.dropCell("Overlay options")}</div>
            <div class="group">${this.cell("xray", "Toggle X-ray", "lit")}</div>
            <div class="group">
              ${this.cell("wire", "Wireframe", "lit")}${this.cell("solid", "Solid", "blue")}${this.cell("material", "Material preview", "lit")}${this.cell("rendered", "Rendered", "lit")}${this.dropCell("Shading options")}
            </div>
          </div>
        </div>
        <div class="row second">
          <div class="zone tools">
            <div class="group">
              ${this.cell("selSet", "Set", "blue")}${this.cell("selAdd", "Extend", "lit")}${this.cell("selSub", "Subtract", "lit")}${this.cell("selInv", "Invert", "lit")}${this.cell("selInt", "Intersect", "lit")}
            </div>
          </div>
          <span></span>
          <button class="ctl options">Options ${chevron()}</button>
        </div>
      </div>
      <p class="info">User Perspective<br />(1) Collection</p>
      <div class="toolbar">
        <div class="toolset">${this.tool("select", "Select box", true, true)}${this.tool("cursor", "Cursor")}</div>
        <div class="toolset">${this.tool("move", "Move")}${this.tool("rotate", "Rotate")}${this.tool("scale", "Scale", false, true)}${this.tool("transform", "Transform")}</div>
        <div class="toolset">${this.tool("annotate", "Annotate", false, true)}${this.tool("measure", "Measure")}</div>
        <div class="toolset">${this.tool("addCube", "Add cube", false, true)}</div>
      </div>
      <svg class="axes" viewBox="1489 79 88 88" role="img" aria-label="View orientation">
        <circle cx="1521.500" cy="111" r="7" fill="#4b3439" stroke="#b03c4c" stroke-width="1.200"/>
        <circle cx="1535" cy="151.500" r="7.500" fill="#35475c" stroke="#3270b8" stroke-width="1.200"/>
        <circle cx="1506" cy="127" r="7.500" fill="#526a2b" stroke="#82bc1e" stroke-width="1.200"/>
        <path d="M1535 122V92" stroke="#2f83e3" stroke-width="2"/>
        <path d="M1535 122l29-5" stroke="#6fa21d" stroke-width="2"/>
        <path d="M1535 122l13 10" stroke="#fb3752" stroke-width="2"/>
        <circle cx="1535" cy="92" r="8" fill="#2f83e3"/>
        <circle cx="1564" cy="117" r="8" fill="#6fa21d"/>
        <circle cx="1548.500" cy="132.500" r="8.500" fill="#fb3752"/>
        <text x="1535" y="96" fill="#0c2340">Z</text><text x="1564" y="121" fill="#1c2906">Y</text><text x="1548.500" y="136.500" fill="#42050f">X</text>
      </svg>
      <div class="nav">
        ${Object.keys(NAV).map((n) => html`<button class="navbtn" aria-label=${n}><svg viewBox="0 0 16 16">${NAV[n]}</svg></button>`)}
      </div>
      <button class="side-toggle" aria-label="Show sidebar"><svg class="arrow" viewBox="0 0 8 10"><path d="M6 1 2.500 5 6 9" fill="none" stroke="currentColor"/></svg></button>
      <div class="popup add" role="menu" aria-label="Add">
        <h2 class="pop-title">Add</h2>
        ${this.menu(ADD_MENU)}
      </div>
      <div class="popup mesh" role="menu" aria-label="Mesh">${this.menu(MESH_MENU)}</div>
      <div class="mark one"></div>
      <div class="mark two"></div>
      <div class="tooltip" role="tooltip">Construct a filled planar mesh with 4 vertices.</div>
    </section>`;
  }

  private outliner() {
    return html`<section class="panel outliner" aria-label="Outliner">
      <div class="phead">
        ${this.pair("outliner", "Editor type")}
        ${this.pair("layers", "Display mode")}
        <label class="search">${icon("search")}<input type="text" aria-label="Search outliner" /></label>
        <span class="grow"></span>
        ${this.pair("filter", "Filter", "snug")}
        <div class="group">${this.cell("newColl", "New collection", "lit")}</div>
      </div>
      <ul class="tree">
        <li class="branch">${icon("collection")}<span>Scene Collection</span></li>
        <li class="branch child">
          <span class="boxed">${icon("collection")}</span><span>Collection</span>
          <span class="toggles">
            <input class="tick" type="checkbox" checked aria-label="Include collection" />
            <button aria-label="Hide in viewport">${icon("eye")}</button>
            <button aria-label="Disable in renders">${icon("photo")}</button>
          </span>
        </li>
      </ul>
    </section>`;
  }

  private card(title: string, check = false) {
    return html`<div class="card"><div class="ctitle">
      <button class="fold" aria-expanded="false" aria-label=${title}>${icon("panelClosed")}${check ? nothing : html`<span>${title}</span>`}</button>
      ${check
        ? html`<input class="tick blue" id="gravity" type="checkbox" .checked=${this.gravity}
            @change=${(e: Event) => (this.gravity = (e.target as HTMLInputElement).checked)} /><label class="glabel" for="gravity">${title}</label>`
        : nothing}
      <i class="dots"></i>
    </div></div>`;
  }

  private properties() {
    return html`<section class="panel properties" aria-label="Properties">
      <div class="phead prop">
        ${this.pair("props", "Editor type")}
        <label class="search">${icon("search")}<input type="text" aria-label="Search properties" /></label>
        <span class="grow"></span>
        <button class="ctl small" aria-label="Options">${chevron()}</button>
      </div>
      <div class="pbody">
        <nav class="ptabs">
          <button class="ptab" aria-label="Tool">${icon("tool")}</button>
          <hr class="rule" />
          <button class="ptab" aria-label="Render">${icon("render")}</button>
          <button class="ptab" aria-label="Output">${icon("output")}</button>
          <button class="ptab" aria-label="View layer">${icon("layers")}</button>
          <button class="ptab on" aria-label="Scene">${icon("scene")}</button>
          <button class="ptab red" aria-label="World">${icon("world")}</button>
          <hr class="rule" />
          <button class="ptab" aria-label="Collection">${icon("collOutline")}</button>
          <hr class="rule late" />
          <button class="ptab red" aria-label="Texture">${icon("texture")}</button>
          <hr class="rule" />
        </nav>
        <div class="pmain">
          <div class="crumb">${icon("scene")}<span>Scene</span><button class="idpin" aria-label="Pin">${icon("pin")}</button></div>
          <div class="card">
            <div class="ctitle"><button class="fold" aria-expanded="true">${icon("panelOpen")}<span>Scene</span></button><i class="dots"></i></div>
            <div class="fields">
              <label for="camera">Camera</label>
              <div class="field">${icon("object")}<input id="camera" />${icon("dropper")}</div>
              <label for="bgscene">Background Scene</label>
              <div class="field">${icon("scene")}<input id="bgscene" /></div>
              <label for="aclip">Active Clip</label>
              <div class="field">${icon("clip")}<input id="aclip" /></div>
            </div>
          </div>
          ${this.card("Units")} ${this.card("Gravity", true)} ${this.card("Keying Sets")} ${this.card("Audio")}
          ${this.card("Rigid Body World")} ${this.card("Custom Properties")}
        </div>
      </div>
    </section>`;
  }

  private timeline() {
    return html`<section class="timeline" aria-label="Timeline">
      <div class="thead">
        <div class="tleft">
          ${this.pair("clock", "Editor type")}
          <div class="group">
            <button class="drop">Playback ${chevron()}</button>
            <button class="drop">Keying ${chevron()}</button>
          </div>
          <div class="menus"><button class="menu-btn">View</button><button class="menu-btn">Marker</button></div>
        </div>
        <div class="tmid">
          <div class="group">${this.cell("record", "Auto keying", "lit")}${this.dropCell("Keying options", true)}</div>
          <div class="group">
            ${[["first", "Jump to start"], ["prevKey", "Previous keyframe"], ["playRev", "Play reversed"], ["play", "Play"], ["nextKey", "Next keyframe"], ["last", "Jump to end"]].map(
              ([n, l]) => this.cell(n, l, "lit key19"),
            )}
          </div>
        </div>
        <div class="tright">
          <input class="num" aria-label="Current frame" .value=${"1"} />
          <div class="range">
            <button aria-label="Use preview range">${icon("stopwatch")}</button>
            <label class="span">Start <input .value=${"1"} /></label>
            <label class="span last">End <input .value=${"250"} /></label>
          </div>
        </div>
      </div>
      <div class="ruler">${range(1, 25).map((n) => html`<span>${n * 10}</span>`)}</div>
      <div class="ticks">
        ${range(-1, 51).map((n) => html`<i class=${classMap({ in: n >= 0 && n < 50, ten: n > 0 && n % 2 === 0 })}></i>`)}
      </div>
      <div class="track"><i></i><i></i></div>
      <div class="playhead">1</div>
      <button class="edge l" aria-label="Show channels"><svg class="arrow" viewBox="0 0 8 10"><path d="M2 1l3.500 4L2 9" fill="none" stroke="currentColor"/></svg></button>
      <button class="edge r" aria-label="Show sidebar"><svg class="arrow" viewBox="0 0 8 10"><path d="M6 1 2.500 5 6 9" fill="none" stroke="currentColor"/></svg></button>
    </section>`;
  }

  render() {
    return html`${this.topbar()}
      <main class="main">
        <div class="left">${this.viewport()} ${this.timeline()}</div>
        <aside class="right">${this.outliner()} ${this.properties()}</aside>
      </main>`;
  }
}
